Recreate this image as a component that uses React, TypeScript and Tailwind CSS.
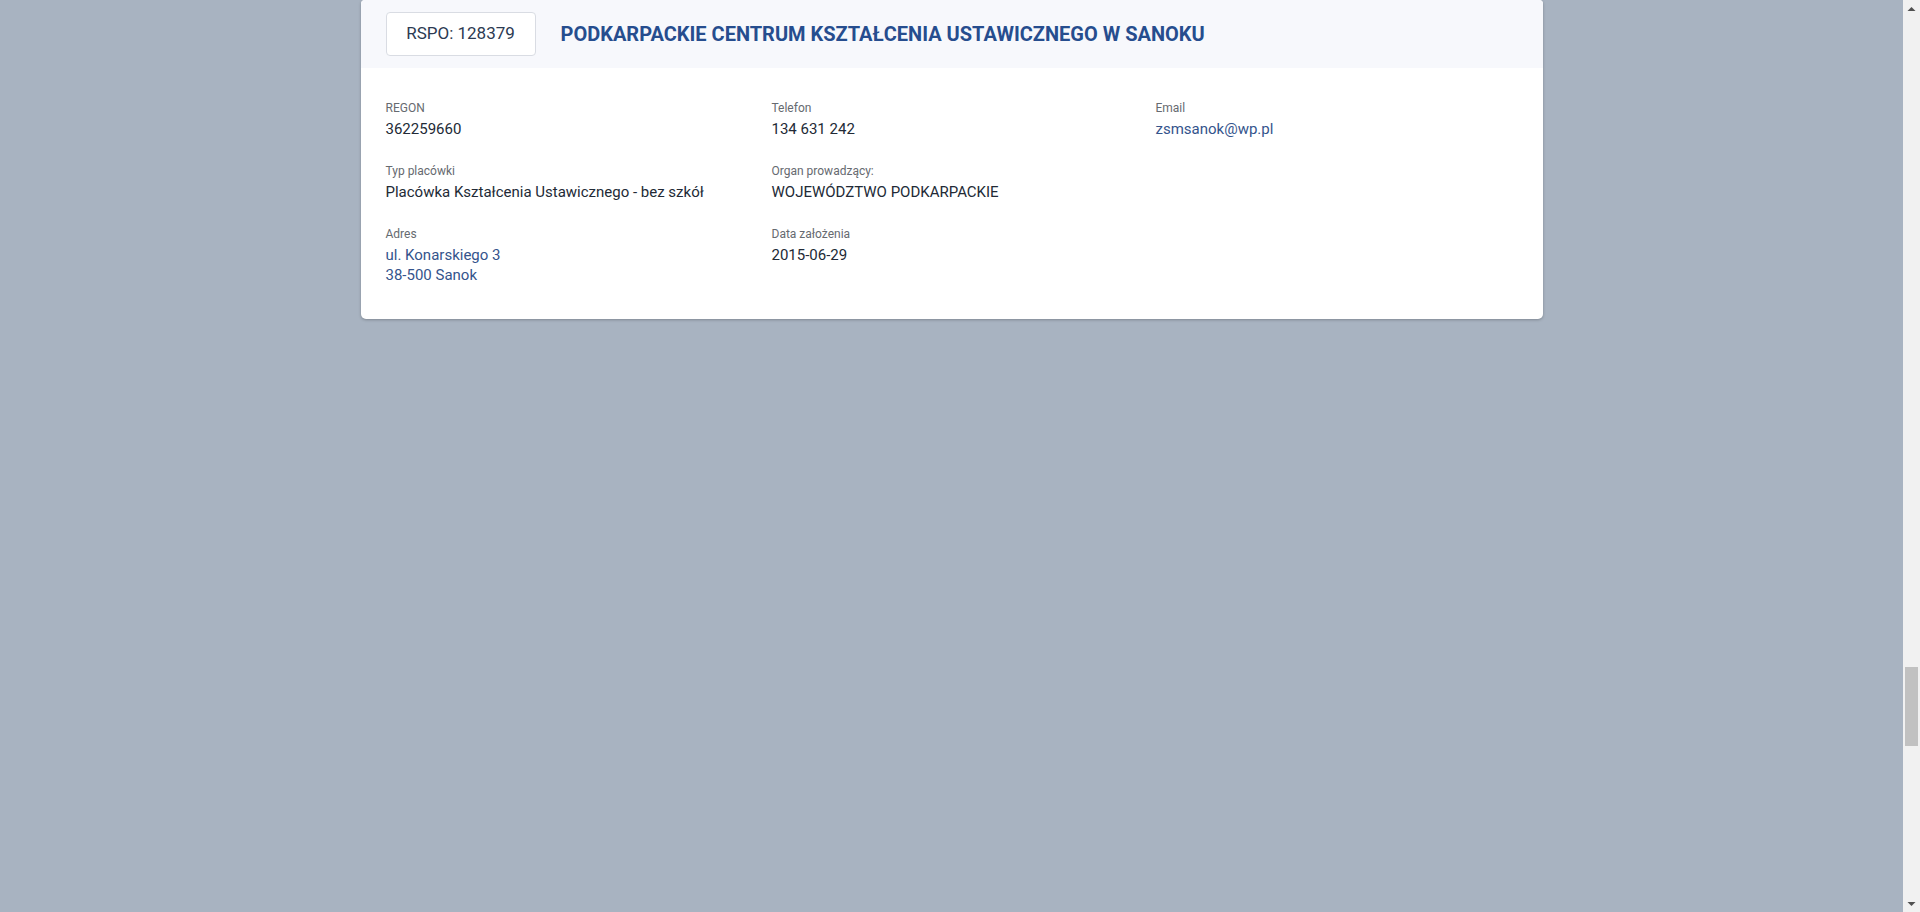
import React from "react";

const Field = ({ label, children, link }: { label: string; children: React.ReactNode; link?: boolean }) => (
  <div className="flex flex-col gap-[3px]">
    <div className="text-[12px] leading-[16px] text-[#666a70]">{label}</div>
    <div className={`text-[15px] leading-[20px] ${link ? "text-[#34548c]" : "text-[#222a36]"}`}>{children}</div>
  </div>
);

export default function App() {
  return (
    <div className="flex h-[912px] w-[1920px] overflow-hidden bg-[#a8b3c1]" style={{ fontFamily: "Roboto, 'Liberation Sans', sans-serif" }}>
      <div className="flex-1 flex justify-center">
        <div className="w-[1182px] h-[319px] bg-white rounded-b-[5px] rounded-t-[4px] shadow-[0_1px_3px_rgba(0,0,0,0.25)] overflow-hidden">
          <div className="h-[68px] bg-[#f7f8fc] flex items-center pl-[25px] gap-[25px]">
            <div className="w-[150px] h-[44px] rounded-[4px] border border-[#d9dce3] bg-white flex items-center justify-center text-[17px] text-[#2c3a52]">
              RSPO: 128379
            </div>
            <div className="text-[20px] font-bold text-[#264d8e]">
              PODKARPACKIE CENTRUM KSZTAŁCENIA USTAWICZNEGO W SANOKU
            </div>
          </div>
          <div className="grid grid-cols-[386px_384px_1fr] gap-y-[24px] pl-[25px] pt-[32px]">
            <Field label="REGON">362259660</Field>
            <Field label="Telefon">134 631 242</Field>
            <Field label="Email" link>zsmsanok@wp.pl</Field>
            <Field label="Typ placówki">Placówka Kształcenia Ustawicznego - bez szkół</Field>
            <Field label="Organ prowadzący:">WOJEWÓDZTWO PODKARPACKIE</Field>
            <div />
            <Field label="Adres" link>
              <div>ul. Konarskiego 3</div>
              <div>38-500 Sanok</div>
            </Field>
            <Field label="Data założenia">2015-06-29</Field>
            <div />
          </div>
        </div>
      </div>
      <div className="w-[17px] h-full bg-[#f1f1f1] flex flex-col items-center relative">
        <div className="h-[17px] flex items-center justify-center">
          <svg width="9" height="6" viewBox="0 0 9 6"><path d="M0.5 5 L4.5 1 L8.5 5 Z" fill="#505050" /></svg>
        </div>
        <div className="flex-1 w-full relative">
          <div className="absolute left-[2px] right-[2px] top-[650px] h-[79px] bg-[#c1c1c1]" />
        </div>
        <div className="h-[17px] flex items-center justify-center">
          <svg width="9" height="6" viewBox="0 0 9 6"><path d="M0.5 1 L4.5 5 L8.5 1 Z" fill="#505050" /></svg>
        </div>
      </div>
    </div>
  );
}
